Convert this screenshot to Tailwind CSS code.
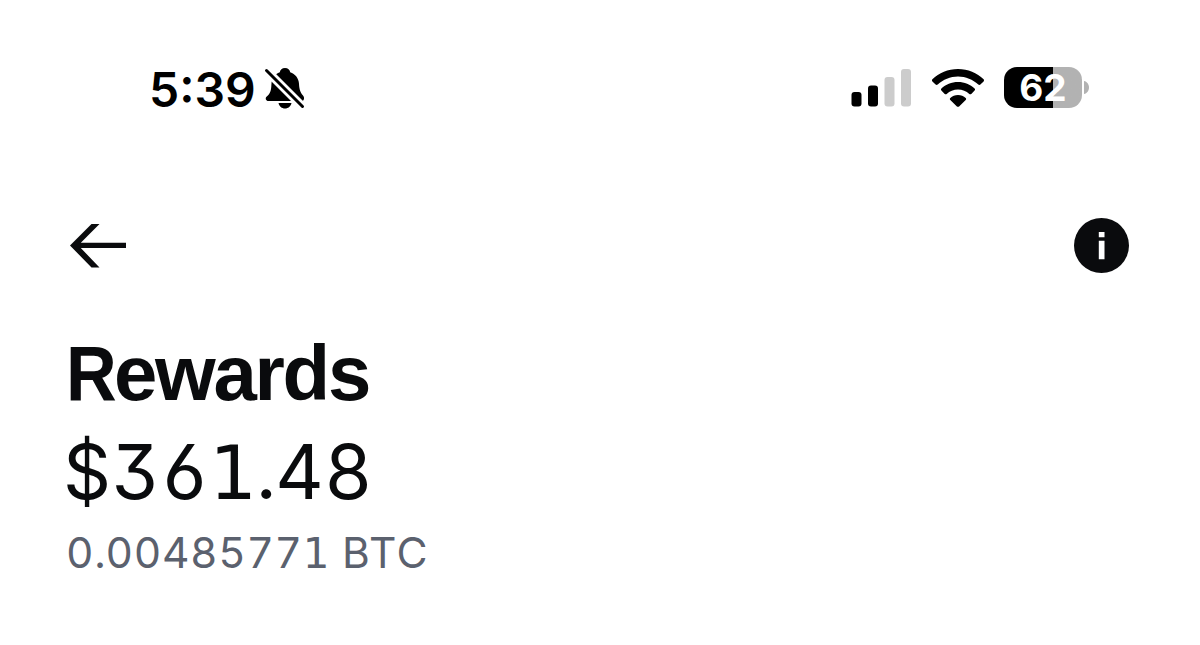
<!DOCTYPE html>
<html lang="en">
<head>
  <meta charset="UTF-8">
  <meta name="viewport" content="width=device-width, initial-scale=1.0">
  <title>Rewards</title>
  <script src="https://cdn.jsdelivr.net/npm/@tailwindcss/browser@4"></script>
</head>
<body class="bg-white h-screen overflow-hidden font-['Inter',sans-serif] text-[#0a0b0d]">
  <!-- Status bar -->
  <header class="flex items-center justify-between pt-[58px] pl-[149px] pr-[111px] text-black">
    <div class="flex items-center gap-[9px] h-[60px]">
      <span class="text-[48px] leading-[60px] font-semibold pt-[3px] w-[106px] whitespace-nowrap">5:39</span>
      <svg class="w-[42px] h-[42px]" viewBox="0 0 42 42">
        <path d="M21 1c3 0 4.800 2 5.200 4.200 5 1.800 8.600 6 8.800 11.500.2 6.500 2 9.500 4.200 12 1.400 1.400 1.200 5.300-1.600 5.300H4.500c-2.700 0-3.500-2.800-2-4.300 3.300-2.700 4.700-5.500 4.900-12C7.600 11 11 7 15.800 5.200 16.200 3 18 1 21 1zM14.500 36h13c-.7 3.400-3.300 5.500-6.500 5.500s-5.800-2.100-6.500-5.500z"/>
        <path d="M2 3l38 38" stroke="#fff" stroke-width="8.500"/>
        <path d="M2.500 3.500l36 36" stroke="#000" stroke-width="3" stroke-linecap="round"/>
      </svg>
    </div>
    <div class="flex items-center h-[60px]">
      <svg class="w-[60px] h-[38px]" viewBox="0 0 60 38">
        <rect x="0.500" y="23" width="10" height="14.500" rx="3"/>
        <rect x="17" y="16.500" width="10" height="21" rx="3"/>
        <rect x="33.500" y="8" width="10" height="29.500" rx="3" fill="#ccc"/>
        <rect x="50" y="0" width="10" height="37.500" rx="3" fill="#ccc"/>
      </svg>
      <svg class="w-[54px] h-[38px] ml-5" viewBox="0 0 54 38">
        <path d="M27 0c10 0 19 4 25.600 10.300.6.600.6 1.500 0 2.100l-3.200 3.200c-.6.600-1.500.6-2.100 0C41.800 10.600 34.800 7.500 27 7.500S12.200 10.600 6.700 15.600c-.6.600-1.500.6-2.100 0l-3.200-3.200c-.6-.6-.6-1.500 0-2.100C8 4 17 0 27 0z"/>
        <path d="M27 13c6.500 0 12.300 2.500 16.600 6.500.6.600.6 1.500 0 2.100l-3.300 3.300c-.6.600-1.400.6-2 0-3-2.700-6.900-4.400-11.300-4.400s-8.300 1.700-11.300 4.400c-.6.600-1.400.6-2 0l-3.300-3.300c-.6-.6-.6-1.500 0-2.100C14.700 15.500 20.500 13 27 13z"/>
        <path d="M27 26c3 0 5.700 1.100 7.700 2.900.6.500.6 1.400 0 2l-6.600 6.500c-.6.600-1.600.6-2.200 0l-6.600-6.500c-.6-.6-.6-1.500 0-2C21.300 27.100 24 26 27 26z"/>
      </svg>
      <div class="flex items-center ml-[19px] -mt-px">
        <div class="w-[78px] h-[41px] rounded-[13px] bg-linear-to-r from-black from-[62.500%] to-[#b2b2b2] to-[62.500%] flex items-center justify-center text-white text-[37px] leading-none font-bold">62</div>
        <svg class="w-[5px] h-[13px] ml-[2px]" viewBox="0 0 5 13"><path d="M0 0c3 .6 5 3.300 5 6.500S3 12.400 0 13z" fill="#b2b2b2"/></svg>
      </div>
    </div>
  </header>

  <!-- Navigation -->
  <nav class="flex items-center justify-between mt-[100px] h-[55px] pl-[70px] pr-[71px]">
    <svg class="w-[57px] h-[44px]" viewBox="0 0 57 44" fill="#0a0b0d">
      <path d="M21.500 0h8L10.800 18.800H56v5.200H10.800L29.500 43.500h-8L0 21.500z"/>
    </svg>
    <svg class="w-[55px] h-[55px]" viewBox="0 0 55 55">
      <circle cx="27.500" cy="27.500" r="27.500" fill="#0a0b0d"/>
      <path d="M24.800 14h5.700v5.200h-5.700zM24.800 22.700h5.700v18.500h-5.700z" fill="#fff"/>
    </svg>
  </nav>

  <!-- Balance -->
  <main class="flex flex-col pl-[63px] whitespace-nowrap">
    <h1 class="mt-[55px] pl-[3px] font-['Liberation_Sans',sans-serif] text-[78px] leading-[90px] font-bold tracking-[-2.300px]"><span class="inline-block w-[48px] origin-left scale-x-90">R</span>ewards</h1>
    <p class="mt-[9px] text-[75px] leading-[90px] tracking-[0.300px] font-normal [font-feature-settings:'tnum','cv09','cv03','cv04']">$36<span class="font-['DejaVu_Sans'] tracking-[-1px]">1</span><span class="tracking-[-1px]">.</span>48</p>
    <p class="mt-[5px] pl-[3px] text-[42.500px] leading-[60px] tracking-[0.600px] font-normal text-[#5b616e] [font-feature-settings:'tnum']">0<span class="tracking-[0px]">.</span>0048577<span class="font-['DejaVu_Sans'] text-[42px]">1</span><span class="tracking-[1.500px] ml-[12px]">BTC</span></p>
  </main>
</body>
</html>
